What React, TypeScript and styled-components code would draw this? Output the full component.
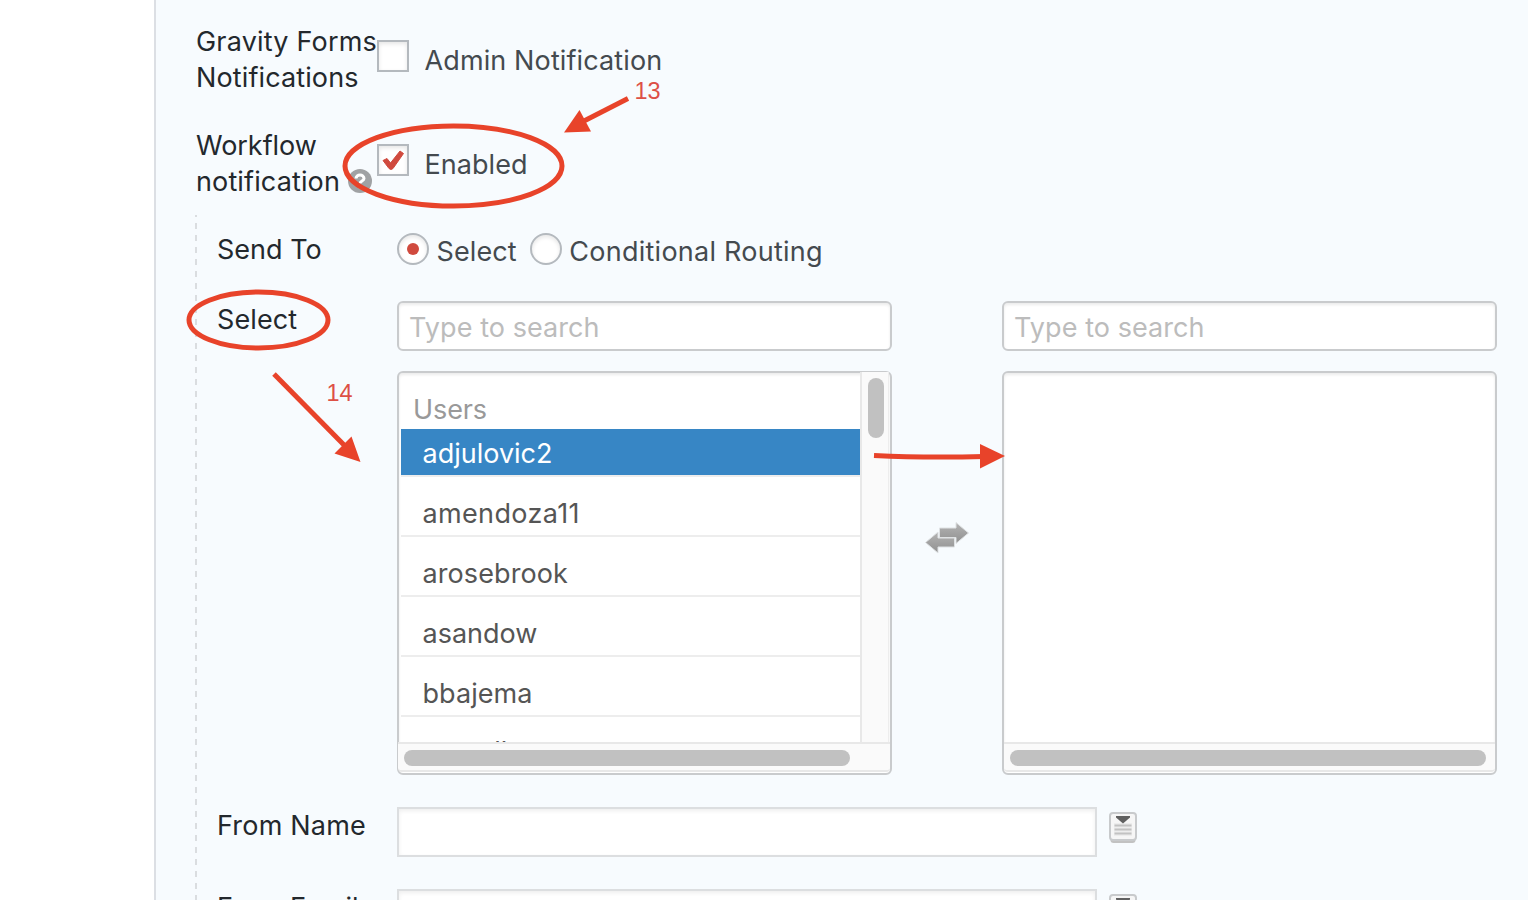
import React from "react";
import styled, { createGlobalStyle } from "styled-components";

const GlobalStyle = createGlobalStyle`
  * { box-sizing: border-box; }
  body { margin: 0; background: #fff; }
`;

const Page = styled.div`
  position: relative;
  width: 1528px;
  height: 900px;
  overflow: hidden;
  padding-left: 154px;
  font-family: Inter, "Liberation Sans", sans-serif;
  font-size: 27px;
  line-height: 36px;
  color: #23282d;
  white-space: nowrap;
`;

const Panel = styled.div`
  height: 900px;
  overflow: hidden;
  background: #f7fbfe;
  border-left: 2px solid #dcdfe4;
  padding: 24px 0 0 39px;
`;

const Setting = styled.div<{ $height: number }>`
  display: flex;
  height: ${(p) => p.$height}px;
  padding-left: 1px;
`;

const SettingLabel = styled.div`
  flex: none;
  width: 181px;
`;

const LabelLine = styled.div`
  display: flex;
  align-items: center;
  gap: 8px;
`;

const HelpIcon = styled.svg`
  flex: none;
  margin-top: -2px;
`;

const Text = styled.span<{ $spacing?: number }>`
  letter-spacing: ${(p) => p.$spacing ?? 0.12}px;
`;

const FieldText = styled(Text)`
  display: block;
  padding-top: 1px;
`;

const Choice = styled.label<{ $gap: number }>`
  display: flex;
  align-items: flex-start;
  gap: ${(p) => p.$gap}px;
  height: 38px;
  color: #444a4f;
`;

const CheckChoice = styled(Choice)`
  margin-top: 16px;

  > span:last-child { padding-top: 3px; }
`;

const RadioChoice = styled(Choice)`
  > span:last-child { padding-top: 1px; }
`;

const Box = styled.span`
  display: flex;
  align-items: center;
  justify-content: center;
  width: 32px;
  height: 32px;
  background: #fff;
  border: 2px solid #b4b9be;
  box-shadow: inset 0 2px 4px rgba(0, 0, 0, 0.1);
`;

const Radio = styled(Box)`
  border-radius: 50%;
`;

const Dot = styled.span`
  width: 12px;
  height: 12px;
  border-radius: 50%;
  background: #d04a3e;
`;

const Nested = styled.div`
  height: 720px;
  padding: 16px 0 0 22px;
  background: repeating-linear-gradient(to bottom, #dadde0 0 6px, transparent 6px 12px) 0 -4px / 2px 732px no-repeat;
`;

const Field = styled.div<{ $height: number }>`
  display: flex;
  height: ${(p) => p.$height}px;
`;

const FieldLabel = styled.div`
  flex: none;
  width: 180px;
`;

const Radios = styled.div`
  display: flex;
  gap: 13px;
  padding-top: 2px;
`;

const Picker = styled.div`
  display: flex;
  flex-direction: column;
  gap: 20px;
  width: 495px;
`;

const Search = styled.div`
  height: 50px;
  padding: 6px 0 0 10px;
  background: #fff;
  border: 2px solid #c9cbcd;
  border-radius: 6px;
  box-shadow: inset 0 2px 3px rgba(0, 0, 0, 0.08);
  color: #bcbcbc;
`;

const ListBox = styled.div`
  display: flex;
  flex-direction: column;
  height: 404px;
  background: #fff;
  border: 2px solid #c9cbcd;
  border-radius: 6px;
  box-shadow: inset 0 2px 3px rgba(0, 0, 0, 0.08);
`;

const ListView = styled.div`
  display: flex;
  height: 369px;
`;

const ListContent = styled.div`
  width: 461px;
  height: 370px;
  overflow: hidden;
  padding-left: 2px;
`;

const GroupLabel = styled.div`
  height: 56px;
  padding: 18px 0 0 12px;
  color: #999;
`;

const Item = styled.div<{ $selected?: boolean }>`
  height: 48px;
  padding: 6px 0 0 21.500px;
  border-bottom: 2px solid #ededed;
  background: ${(p) => (p.$selected ? "#3786c5" : "#fff")};
  background-clip: padding-box;
  color: ${(p) => (p.$selected ? "#fff" : "#555")};

  & + & { margin-top: 12px; }
  &:last-child { padding-top: 4px; }
`;

const VerticalBar = styled.div`
  width: 29px;
  height: 370px;
  margin-top: -1px;
  border-left: 2px solid #e8e8e8;
  border-right: 1px solid #ededed;
  background: #fafafa;
  padding: 6px 0 0 6px;
`;

const HorizontalBar = styled.div<{ $inset: number }>`
  height: 30px;
  margin-left: ${(p) => p.$inset}px;
  border-top: 2px solid #e8e8e8;
  border-bottom: 2px solid #e8e8e8;
  border-radius: 0 0 4px 4px;
  background: #fafafa;
  padding: 6px 0 0 6px;
`;

const Thumb = styled.div<{ $w: number; $h: number }>`
  width: ${(p) => p.$w}px;
  height: ${(p) => p.$h}px;
  border-radius: 8px;
  background: #c1c1c1;
`;

const SwapCell = styled.div`
  width: 110px;
  padding: 220px 0 0 32px;
`;

const TextInput = styled.div`
  width: 700px;
  height: 50px;
  background: #fff;
  border: 2px solid #dcdee0;
  box-shadow: inset 0 2px 4px rgba(0, 0, 0, 0.07);
`;

const MergeTag = styled.div`
  padding: 4px 0 0 11px;
`;

const Annotations = styled.svg`
  position: absolute;
  left: 0;
  top: 0;
  pointer-events: none;
`;

const Glyph = styled.svg`
  display: block;
`;

const MergeIcon = () => (
  <MergeTag>
    <Glyph width="30" height="34" viewBox="0 0 30 34">
      <rect x="2.500" y="6" width="25" height="26" rx="3" fill="#c2c2c2" />
      <rect x="2" y="2" width="26" height="27" rx="3" fill="#f6f6f6" stroke="#c8cacc" strokeWidth="2" />
      <path d="M6 12V25H24V12" fill="#ededed" />
      <path d="M8 5H22V6.500L15 12.500L8 6.500Z" fill="#606060" />
      <path d="M6.500 14.500H23.500M6.500 18.500H23.500M6.500 22.500H23.500" stroke="#c2c2c2" strokeWidth="2" />
    </Glyph>
  </MergeTag>
);

const SwapIcon = () => (
  <Glyph width="46" height="34" viewBox="0 0 46 34">
    <defs>
      <linearGradient id="swap" x1="0" y1="0" x2="0" y2="1">
        <stop offset="0" stopColor="#b4b4b4" />
        <stop offset="1" stopColor="#909090" />
      </linearGradient>
    </defs>
    <g fill="url(#swap)" stroke="#dfe2e4" strokeWidth="1">
      <path d="M15.500 7H32V1.500L44.500 12L32 22.500V16.500H15.500Z" />
      <path d="M30.500 17V26H14V32L1.500 21.500L14 11V17Z" />
    </g>
  </Glyph>
);

const users = [
  { name: "adjulovic2", spacing: 0 },
  { name: "amendoza11", spacing: 0.35 },
  { name: "arosebrook", spacing: 0.1 },
  { name: "asandow", spacing: 0 },
  { name: "bbajema", spacing: 0.05 },
  { name: "ccarell", spacing: 0 },
];

export default function App() {
  return (
    <Page>
      <GlobalStyle />
      <Panel>
        <Setting $height={104}>
          <SettingLabel>
            <LabelLine><Text $spacing={0.2}>Gravity Forms</Text></LabelLine>
            <LabelLine><Text>Notifications</Text></LabelLine>
          </SettingLabel>
          <CheckChoice $gap={15.5}>
            <Box />
            <Text>Admin Notification</Text>
          </CheckChoice>
        </Setting>
        <Setting $height={87}>
          <SettingLabel>
            <LabelLine><Text $spacing={-0.05}>Workflow</Text></LabelLine>
            <LabelLine>
              <Text $spacing={0.13}>notification</Text>
              <HelpIcon width="24" height="24" viewBox="0 0 24 24">
                <circle cx="12" cy="12" r="12" fill="#a0a2a4" />
                <path d="M8 9.500C8 4.800 16 4.800 16 9.500C16 12 12 12 12 14.500" fill="none" stroke="#fff" strokeWidth="3" />
                <circle cx="12" cy="18" r="1.700" fill="#fff" />
              </HelpIcon>
            </LabelLine>
          </SettingLabel>
          <CheckChoice $gap={15.5}>
            <Box>
              <svg width="28" height="28" viewBox="0 0 28 28">
                <path d="M4 14.500L8 12.500L11.500 17L21 5L24.500 7.500L14 22.500Q12 24.500 10 22.500Z" fill="#d04a3e" stroke="#d04a3e" strokeWidth="1" strokeLinejoin="round" />
              </svg>
            </Box>
            <Text $spacing={0.05}>Enabled</Text>
          </CheckChoice>
        </Setting>
        <Nested>
          <Field $height={70}>
            <FieldLabel><FieldText $spacing={0}>Send To</FieldText></FieldLabel>
            <Radios>
              <RadioChoice $gap={7.5}><Radio><Dot /></Radio><Text>Select</Text></RadioChoice>
              <RadioChoice $gap={7.5}><Radio /><Text $spacing={0.25}>Conditional Routing</Text></RadioChoice>
            </Radios>
          </Field>
          <Field $height={506}>
            <FieldLabel><FieldText>Select</FieldText></FieldLabel>
            <Picker>
              <Search><FieldText $spacing={0.07}>Type to search</FieldText></Search>
              <ListBox>
                <ListView>
                  <ListContent>
                    <GroupLabel><FieldText $spacing={-0.1}>Users</FieldText></GroupLabel>
                    {users.map((u, i) => (
                      <Item key={u.name} $selected={i === 0}>
                        <FieldText $spacing={u.spacing}>{u.name}</FieldText>
                      </Item>
                    ))}
                  </ListContent>
                  <VerticalBar><Thumb $w={16} $h={60} /></VerticalBar>
                </ListView>
                <HorizontalBar $inset={-1}><Thumb $w={446} $h={16} /></HorizontalBar>
              </ListBox>
            </Picker>
            <SwapCell><SwapIcon /></SwapCell>
            <Picker>
              <Search><FieldText $spacing={0.07}>Type to search</FieldText></Search>
              <ListBox>
                <ListView />
                <HorizontalBar $inset={0}><Thumb $w={476} $h={16} /></HorizontalBar>
              </ListBox>
            </Picker>
          </Field>
          <Field $height={82}>
            <FieldLabel><FieldText $spacing={0.2}>From Name</FieldText></FieldLabel>
            <TextInput />
            <MergeIcon />
          </Field>
          <Field $height={82}>
            <FieldLabel><FieldText $spacing={0.13}>From Email</FieldText></FieldLabel>
            <TextInput />
            <MergeIcon />
          </Field>
        </Nested>
      </Panel>
      <Annotations width="1528" height="900" viewBox="0 0 1528 900">
        <g fill="none" stroke="#e8432a" strokeWidth="5">
          <ellipse cx="453.500" cy="166" rx="108.500" ry="40" />
          <ellipse cx="258.500" cy="320" rx="69.500" ry="28" />
          <path d="M628 98.500L582 122" />
          <path d="M274 374L346 447" />
          <path d="M874 455.500Q925 458 984 456.500" />
        </g>
        <g fill="#e8432a">
          <path d="M564 132.500L579.500 110L591 131.500Z" />
          <path d="M360.500 462L334.500 453.500L351.500 436.500Z" />
          <path d="M1005 456L980 444V468.500Z" />
        </g>
        <g fill="#dd5046" fontFamily="Liberation Sans, sans-serif" fontSize="23.500">
          <text x="634.500" y="99">13</text>
          <text x="326.500" y="401">14</text>
        </g>
      </Annotations>
    </Page>
  );
}
